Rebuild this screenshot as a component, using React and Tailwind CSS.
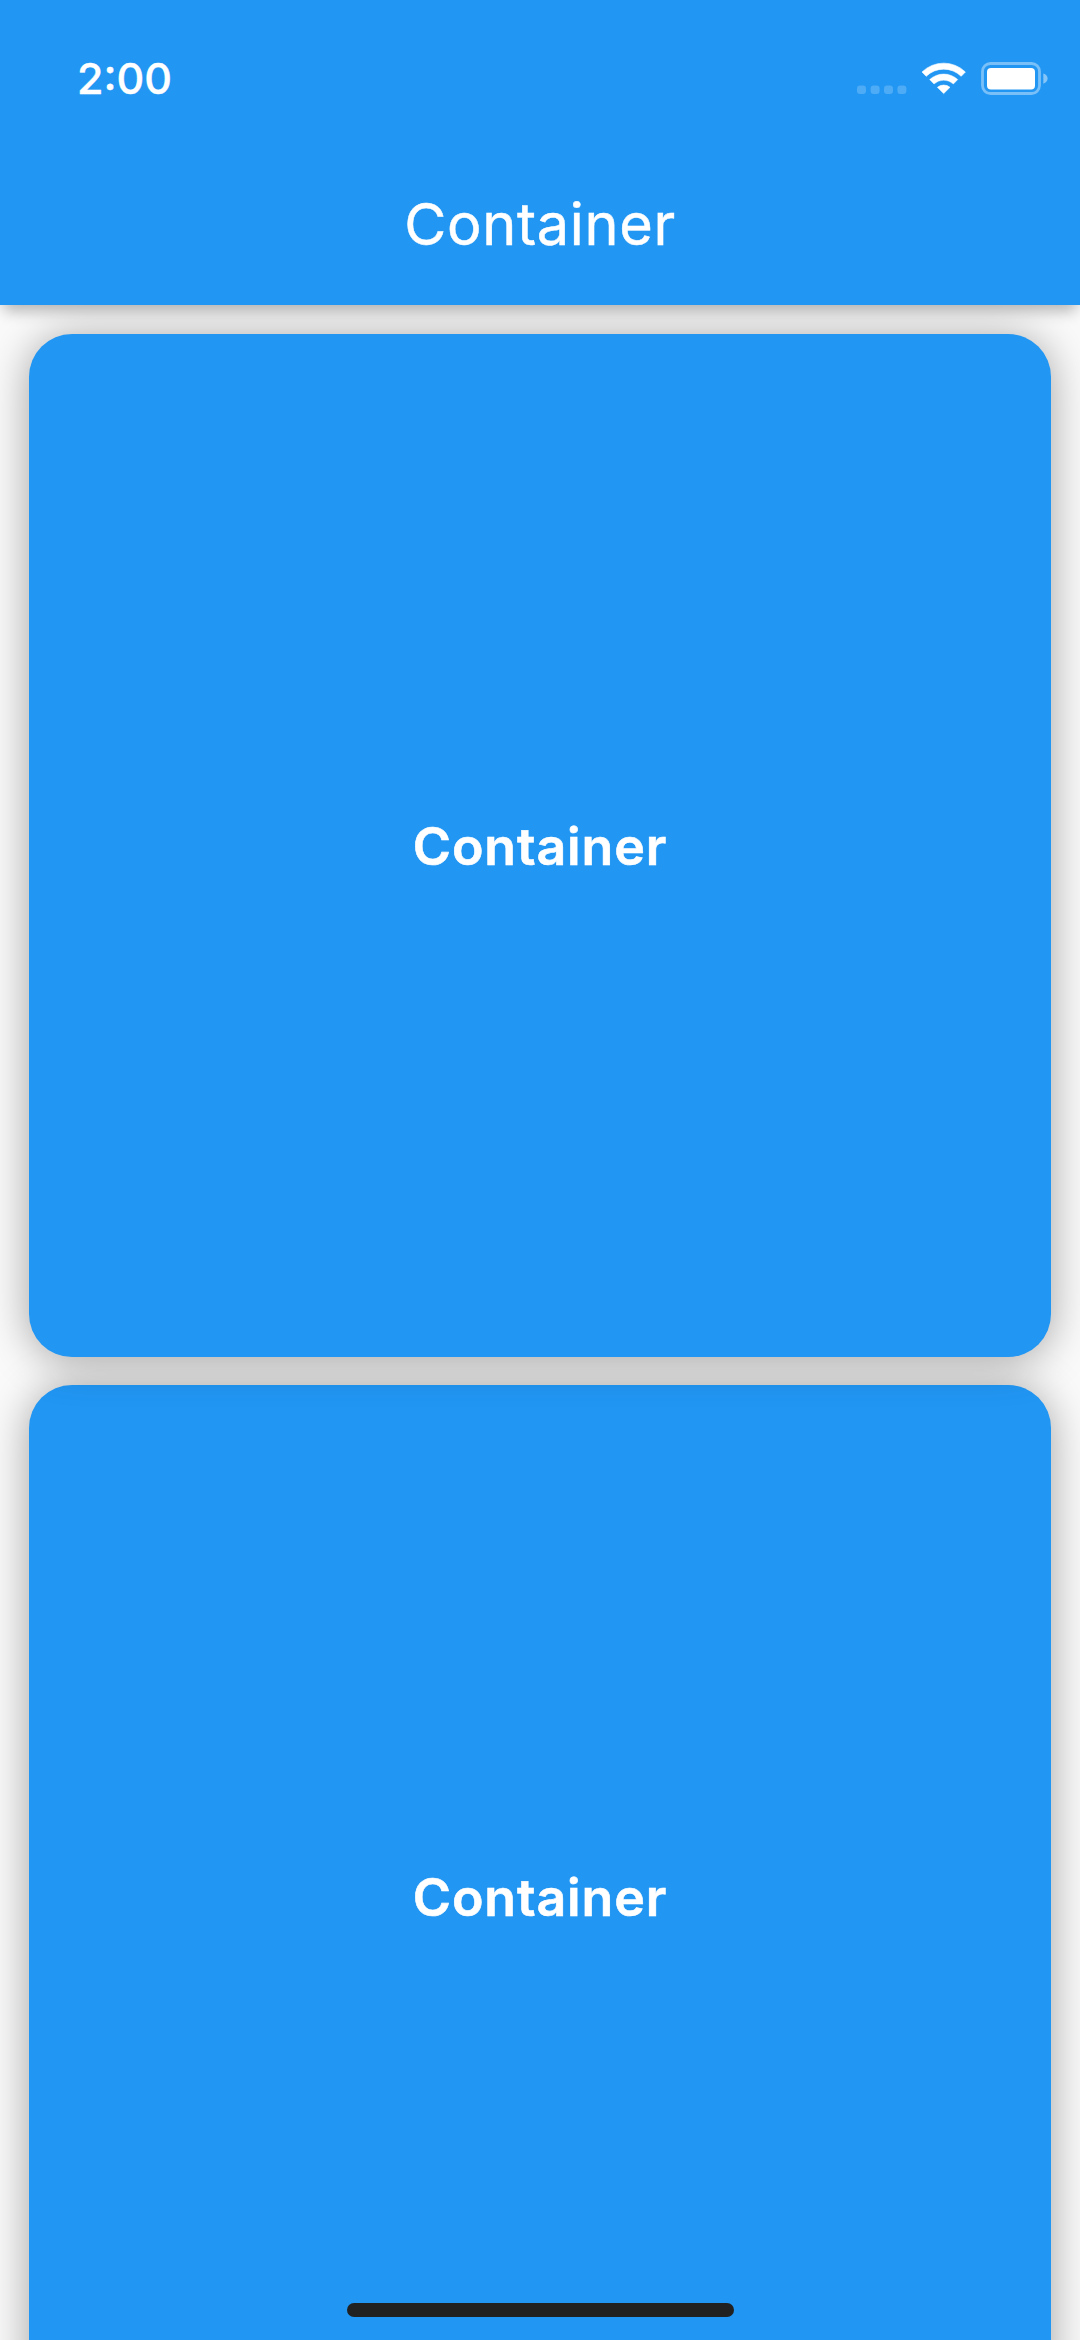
function StatusIcons() {
  return (
    <svg width="192" height="36" viewBox="0 0 192 36" fill="white">
      <g opacity="0.2">
        <rect x="0" y="23.5" width="9" height="8.6" rx="3" />
        <rect x="13.6" y="23.5" width="9" height="8.6" rx="3" />
        <rect x="27" y="23.5" width="9" height="8.6" rx="3" />
        <rect x="40.4" y="23.5" width="9" height="8.6" rx="3" />
      </g>
      <path d="M65 10 A31 31 0 0 1 108.4 10 L104.2 14.3 A25 25 0 0 0 69.2 14.3 Z" strokeWidth="0.6" stroke="white" strokeLinejoin="round" />
      <path d="M72.6 17.6 A20.5 20.5 0 0 1 100.8 17.6 L96.4 22 A14.2 14.2 0 0 0 77 22 Z" strokeWidth="0.4" stroke="white" strokeLinejoin="round" />
      <path d="M80.4 25.3 A10 10 0 0 1 93 25.3 L86.7 31.6 Z" strokeWidth="0.6" stroke="white" strokeLinejoin="round" />
      <rect x="125.5" y="1.5" width="57" height="30" rx="8" fill="none" stroke="white" strokeWidth="2.8" opacity="0.4" />
      <rect x="130" y="6" width="48" height="21.5" rx="4" />
      <path d="M186.3 11.6 Q190.6 13 190.6 16.6 Q190.6 20.2 186.3 21.8 Z" opacity="0.45" />
    </svg>
  );
}

function Card({ className }) {
  return (
    <section className={`flex h-[1022.4px] shrink-0 items-center justify-center rounded-[43px] bg-[#2196f3] pt-[3px] text-white shadow-[0_3px_43px_0_rgba(0,0,0,0.35)] ${className}`}>
      <span className="text-[51.84px] leading-none font-semibold tracking-[0.9px] [-webkit-text-stroke:0.6px_white]">Container</span>
    </section>
  );
}

export default function App() {
  return (
    <div className="relative flex h-[2340px] w-[1080px] flex-col overflow-hidden bg-[#fafafa] font-['Inter',sans-serif]">
      <header className="relative z-10 flex h-[305.4px] shrink-0 flex-col bg-[#2196f3] text-white shadow-[0_10px_14px_-4px_rgba(0,0,0,0.28)]">
        <div className="flex h-[144px] items-start justify-between pt-[62px] pr-[31px] pl-[77px]">
          <span className="mt-[-5px] text-[43px] leading-[43px] font-medium [-webkit-text-stroke:0.4px_white]">2:00</span>
          <StatusIcons />
        </div>
        <div className="flex flex-1 items-center justify-center pt-px">
          <h1 className="text-[57.6px] leading-none font-normal tracking-[0.7px] [-webkit-text-stroke:0.5px_white]">Container</h1>
        </div>
      </header>
      <main className="isolate flex flex-1 flex-col gap-[28.8px] overflow-hidden px-[28.8px] pt-[28.8px]">
        <Card className="relative z-10" />
        <Card className="" />
      </main>
      <div className="absolute bottom-[23px] left-[347px] z-20 h-[14.5px] w-[387px] rounded-full bg-[#212121]" />
    </div>
  );
}
